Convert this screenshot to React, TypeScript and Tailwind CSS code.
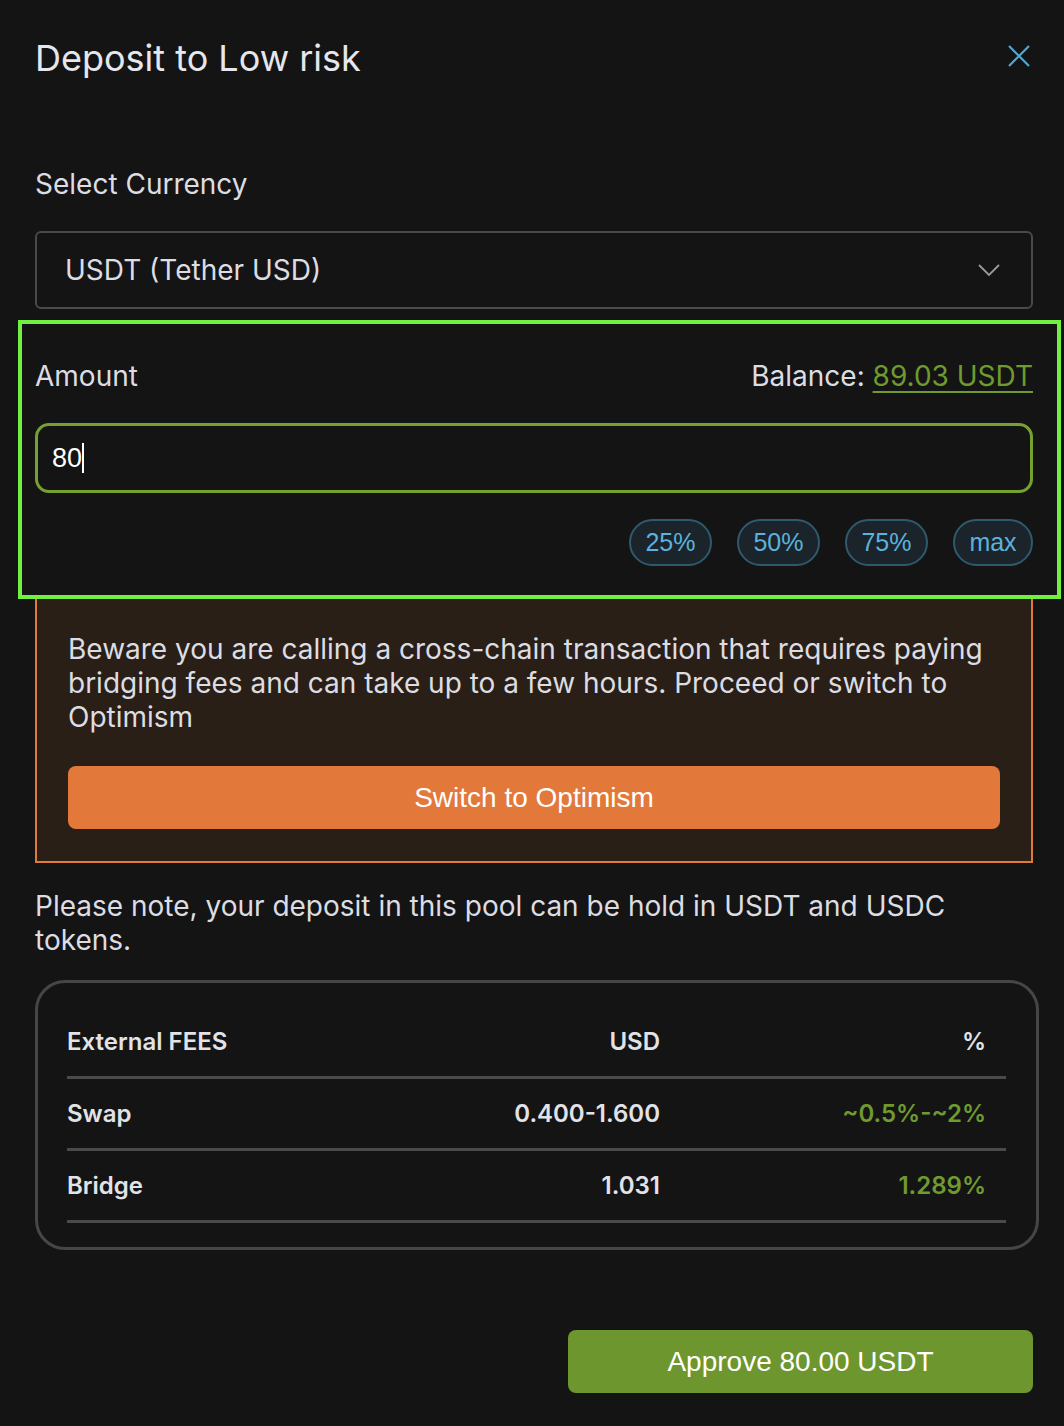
import React from "react"

const fees = [
    { name: "Swap", usd: "0.400-1.600", pct: "~0.5%-~2%" },
    { name: "Bridge", usd: "1.031", pct: "1.289%" },
]

const presets = [
    { label: "25%", w: "w-[83px]" },
    { label: "50%", w: "w-[83px]" },
    { label: "75%", w: "w-[83px]" },
    { label: "max", w: "w-[80px]" },
]

export default function App() {
    const inter = { fontFamily: "Inter, 'Noto Sans', sans-serif" }
    const arial = { fontFamily: "'Liberation Sans', Arial, sans-serif" }

    return (
        <div className="w-[1064px] min-h-[1426px] bg-[#141414] text-[#dcdde3] pb-[33px]" style={inter}>
            {/* Header */}
            <div className="flex items-center justify-between pl-[35px] pr-[33px] pt-[37px]">
                <h1 className="text-[36px] leading-[42px] font-normal text-[#e6e7ec]">Deposit to Low risk</h1>
                <svg width="24" height="24" viewBox="0 0 24 24" className="text-[#4fa8d2] -mt-[4px]">
                    <path d="M2 2 L22 22 M22 2 L2 22" stroke="currentColor" strokeWidth="2.2" fill="none" />
                </svg>
            </div>

            {/* Currency select */}
            <div className="pl-[35px] pr-[31px] mt-[88px]">
                <div className="text-[28px] leading-[34px]">Select Currency</div>
                <div className="mt-[30px] h-[78px] border-2 border-[#4a4a4a] rounded-[6px] flex items-center justify-between pl-[28px] pr-[30px]">
                    <span className="text-[28px]">USDT (Tether USD)</span>
                    <svg width="24" height="14" viewBox="0 0 24 14" className="text-[#9a9a9e]">
                        <path d="M2 2 L12 12 L22 2" stroke="currentColor" strokeWidth="1.8" fill="none" />
                    </svg>
                </div>
            </div>

            {/* Amount (highlighted) */}
            <div className="ml-[18px] w-[1043px] mt-[11px] border-4 border-[#72f042] pl-[13px] pr-[24px] pt-[35px] pb-[29px]">
                <div className="flex items-center justify-between text-[28px] leading-[34px]">
                    <span>Amount</span>
                    <span>
                        Balance:{" "}
                        <span className="text-[#6f9a2e] underline decoration-2 underline-offset-[5px]">89.03 USDT</span>
                    </span>
                </div>
                <div className="mt-[30px] h-[70px] border-[3px] border-[#76a12f] rounded-[14px] flex items-center pl-[14px]" style={arial}>
                    <span className="text-[27px] text-white">80</span>
                    <span className="w-[2px] h-[30px] bg-white"></span>
                </div>
                <div className="mt-[26px] flex justify-end gap-[25px]" style={arial}>
                    {presets.map((p) => (
                        <button
                            key={p.label}
                            className={`${p.w} h-[47px] rounded-full border-2 border-[#2f5a6e] bg-[#1b242a] text-[#5cb2dc] text-[25px]`}
                        >
                            {p.label}
                        </button>
                    ))}
                </div>
            </div>

            {/* Cross-chain warning */}
            <div className="ml-[35px] mr-[31px] border-2 border-t-0 border-[#e07a38] bg-[#2a1f17] px-[31px] pt-[33px] pb-[32px]">
                <p className="text-[28px] leading-[34px]">
                    Beware you are calling a cross-chain transaction that requires paying bridging fees and can take up to a few hours. Proceed or switch to Optimism
                </p>
                <button className="mt-[32px] w-full h-[63px] rounded-[8px] bg-[#e2793a] text-white text-[28px]" style={arial}>
                    Switch to Optimism
                </button>
            </div>

            <p className="pl-[35px] pr-[100px] mt-[26px] text-[28px] leading-[34px]">
                Please note, your deposit in this pool can be hold in USDT and USDC tokens.
            </p>

            {/* Fees table */}
            <div className="ml-[35px] w-[1004px] mt-[23px] border-[3px] border-[#464646] rounded-[30px] pl-[29px] pr-[30px] pt-[24px] pb-[24px]">
                <div className="flex items-center h-[72px] border-b-[3px] border-[#4a4a4a] text-[24px] font-semibold text-[#e2e3e8]">
                    <span className="w-[373px]">External FEES</span>
                    <span className="w-[220px] text-right">USD</span>
                    <span className="flex-1 text-right pr-[20px]">%</span>
                </div>
                {fees.map((f) => (
                    <div key={f.name} className="flex items-center h-[72px] border-b-[3px] border-[#4a4a4a] text-[24px] font-semibold text-[#e2e3e8]">
                        <span className="w-[373px]">{f.name}</span>
                        <span className="w-[220px] text-right">{f.usd}</span>
                        <span className="flex-1 text-right pr-[20px] text-[#6f9a2e]">{f.pct}</span>
                    </div>
                ))}
            </div>

            <div className="flex justify-end px-[31px] mt-[80px]">
                <button className="w-[465px] h-[63px] rounded-[8px] bg-[#6e962f] text-white text-[28px]" style={arial}>
                    Approve 80.00 USDT
                </button>
            </div>
        </div>
    )
}
